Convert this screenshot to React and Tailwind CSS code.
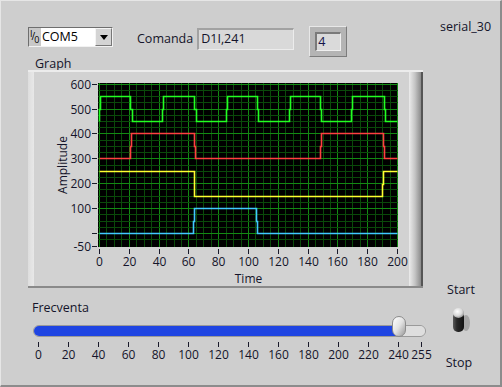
import React from 'react';

const FONT = { fontFamily: '"Open Sans", "Noto Sans", sans-serif' };

// trace points in panel pixel coordinates
const green = [
  [99, 121], [99, 109], [100, 109], [100, 96], [130, 96], [130, 109], [132, 109], [132, 121],
  [162, 121], [162, 109], [163, 109], [163, 96], [194, 96], [194, 109], [196, 109], [196, 121],
  [226, 121], [226, 109], [227, 109], [227, 96], [257, 96], [257, 109], [258, 109], [258, 121],
  [289, 121], [289, 109], [290, 109], [290, 96], [320, 96], [320, 109], [321, 109], [321, 121],
  [351, 121], [351, 109], [352, 109], [352, 96], [384, 96], [384, 109], [385, 109], [385, 121],
  [397, 121],
];
const red = [
  [99, 158], [130, 158], [130, 146], [131, 146], [131, 133], [194, 133], [194, 146], [195, 146],
  [195, 158], [320, 158], [320, 146], [321, 146], [321, 133], [383, 133], [383, 146], [384, 146],
  [384, 158], [397, 158],
];
const yellow = [
  [99, 171], [194, 171], [194, 196], [382, 196], [382, 184], [383, 184], [383, 171], [397, 171],
];
const cyan = [
  [99, 233], [193, 233], [193, 221], [194, 221], [194, 208], [256, 208], [256, 221], [257, 221],
  [257, 233], [397, 233],
];

const pts = (a) => a.map(([x, y]) => `${x + 0.5},${y + 0.5}`).join(' ');

const xOf = (t) => Math.round(99 + t * 1.49);
const yOf = (v) => (v === -50 ? 246 : Math.round(233 - v * 0.249));

function Chart() {
  const minorX = [];
  for (let t = 0; t <= 200; t += 5) minorX.push(t);
  const minorY = [];
  for (let v = -25; v <= 600; v += 25) minorY.push(v);
  const yTicks = [600, 500, 400, 300, 200, 100, 0, -50];
  const xTicks = [0, 20, 40, 60, 80, 100, 120, 140, 160, 180, 200];
  return (
    <svg width="375" height="214" viewBox="34 72 375 214" className="block">
      <rect x="98" y="83" width="300" height="164" fill="#000" />
      <g shapeRendering="crispEdges">
        {minorX.map((t) => (
          <line key={'mx' + t} x1={xOf(t) + 0.5} x2={xOf(t) + 0.5} y1="83" y2="247"
            stroke={t % 20 === 0 ? '#138a13' : '#0a4a0a'} strokeWidth="1" />
        ))}
        {minorY.map((v) => (
          <line key={'my' + v} y1={yOf(v) + 0.5} y2={yOf(v) + 0.5} x1="98" x2="398"
            stroke={v % 100 === 0 ? '#138a13' : '#0a4a0a'} strokeWidth="1" />
        ))}
        {yTicks.map((v) => (
          <line key={'yl' + v} x1="92" x2="97" y1={yOf(v) + 0.5} y2={yOf(v) + 0.5} stroke="#1a1a2a" />
        ))}
        {xTicks.map((t) => (
          <line key={'xl' + t} x1={xOf(t) + 0.5} x2={xOf(t) + 0.5} y1="249" y2="254" stroke="#1a1a2a" />
        ))}
      </g>
      <polyline points={pts(green)} fill="none" stroke="#22ff22" strokeWidth="1.6" />
      <polyline points={pts(red)} fill="none" stroke="#ff4040" strokeWidth="1.6" />
      <polyline points={pts(yellow)} fill="none" stroke="#ffff30" strokeWidth="1.6" />
      <polyline points={pts(cyan)} fill="none" stroke="#40c8ff" strokeWidth="1.6" />

      {yTicks.filter((v) => v !== 0).map((v) => (
        <text key={'yt' + v} x="91" y={yOf(v) + 4.5} textAnchor="end" fontSize="12" fill="#14142a" style={FONT}>
          {v}
        </text>
      ))}
      {xTicks.map((t) => (
        <text key={'xt' + t} x={xOf(t) + 0.5} y="266" textAnchor="middle" fontSize="12" fill="#14142a" style={FONT}>
          {t}
        </text>
      ))}
      <text x="248.5" y="283" textAnchor="middle" fontSize="12" fill="#14142a" style={FONT}>Time</text>
      <text x="66.5" y="165" textAnchor="middle" fontSize="12" fill="#14142a" style={FONT}
        transform="rotate(-90 66.5 165)">Amplitude</text>
    </svg>
  );
}

function SliderScale() {
  const ticks = [0, 20, 40, 60, 80, 100, 120, 140, 160, 180, 200, 220, 240, 255];
  return (
    <svg width="412" height="24" viewBox="28 340 412 24" className="block">
      {ticks.map((t) => {
        const x = Math.round(38 + t * 1.5) + 0.5;
        return (
          <g key={t}>
            <line x1={x} x2={x} y1="341" y2="346" stroke="#1a1a2a" shapeRendering="crispEdges" />
            <text x={x} y="358" textAnchor="middle" fontSize="12" fill="#14142a" style={FONT}>{t}</text>
          </g>
        );
      })}
    </svg>
  );
}

function Toggle() {
  return (
    <svg width="22" height="27" viewBox="0 0 22 27" className="block">
      <defs>
        <linearGradient id="body" x1="0" x2="1" y1="0" y2="0">
          <stop offset="0" stopColor="#5a5a5a" />
          <stop offset="0.35" stopColor="#2a2a2a" />
          <stop offset="1" stopColor="#111" />
        </linearGradient>
        <radialGradient id="head" cx="0.4" cy="0.35" r="0.7">
          <stop offset="0" stopColor="#ffffff" />
          <stop offset="0.6" stopColor="#d8d8d8" />
          <stop offset="1" stopColor="#8a8a8a" />
        </radialGradient>
      </defs>
      <ellipse cx="15" cy="16" rx="4" ry="8" fill="#9c9c9c" opacity="0.8" />
      <rect x="2" y="5" width="11" height="20" rx="5" fill="url(#body)" />
      <ellipse cx="7.5" cy="6" rx="5.5" ry="5" fill="url(#head)" />
    </svg>
  );
}

export default function App() {
  return (
    <div
      className="w-[502px] h-[387px] bg-[#cecece] border-t border-l border-t-[#e6e6e6] border-l-[#e6e6e6] border-r-2 border-b-2 border-r-[#8c8c8c] border-b-[#8c8c8c] flex overflow-hidden text-[12px] text-[#14142a]"
      style={FONT}
    >
      {/* left column */}
      <div className="w-[398px] ml-[27px] pt-[25px] flex flex-col">
        {/* top row */}
        <div className="flex items-start h-[31px]">
          <div className="mt-[1px] w-[85px] h-[20px] flex border border-t-[#6e6e6e] border-l-[#6e6e6e] border-r-[#f2f2f2] border-b-[#f2f2f2] bg-[#c8c8c8]">
            <div className="w-[12px] pl-[1px] pt-[1px] text-[9px] leading-[8px] text-black">
              I<span className="inline-block -ml-[1px] translate-y-[3px] text-[10px]">/</span><span className="inline-block -ml-[1px] translate-y-[6px]">0</span>
            </div>
            <div className="w-[54px] bg-white leading-[18px] pl-[1px] text-black text-[12.5px]">COM5</div>
            <div className="flex-1 flex items-center justify-center bg-[#d4d4d4] border border-t-[#f4f4f4] border-l-[#f4f4f4] border-r-[#777] border-b-[#777]">
              <div className="w-0 h-0 border-l-[4px] border-r-[4px] border-t-[5px] border-l-transparent border-r-transparent border-t-black" />
            </div>
          </div>
          <div className="ml-[24px] mt-[5px] leading-[16px] text-[12.5px]">Comanda</div>
          <div className="ml-[4px] mt-[2px] w-[97px] h-[22px] bg-[#d9d9d9] border-t-2 border-l-2 border-t-[#a2a2a2] border-l-[#a2a2a2] border-r border-b border-r-[#ececec] border-b-[#ececec] leading-[18px] pl-[2px] text-[12.5px]">
            D1I,241
          </div>
          <div className="ml-[15px] w-[38px] h-[31px] bg-[#b4b4b4] border border-t-[#e8e8e8] border-l-[#e8e8e8] border-r-[#7c7c7c] border-b-[#7c7c7c] p-[5px]">
            <div className="w-full h-full bg-[#dadada] border-t-2 border-l-2 border-t-[#7a7a7a] border-l-[#7a7a7a] border-r border-b border-r-[#f0f0f0] border-b-[#f0f0f0] leading-[16px] pl-[1px] text-[12.5px] text-[#14144a]">
              4
            </div>
          </div>
        </div>

        {/* graph */}
        <div className="ml-[7px] h-[13px] leading-[13px] text-[12.5px]">Graph</div>
        <div className="w-[395px] h-[218px] flex bg-[#d2d2d2] border-t-2 border-t-[#ececec] border-b-2 border-b-[#8a8a8a]">
          <div className="w-[6px] bg-gradient-to-r from-[#dedede] to-[#e8e8e8]" />
          <Chart />
          <div className="w-[14px] bg-gradient-to-r from-[#ececec] via-[#c4c4c4] to-[#8c8c8c] border-r-2 border-r-[#555]" />
        </div>

        {/* slider */}
        <div className="ml-[4px] mt-[12px] leading-[16px] text-[12.5px]">Frecventa</div>
        <div className="relative h-[22px]">
          <div className="ml-[5px] mt-[9px] w-[393px] h-[12px] flex rounded-full overflow-hidden border border-[#9a9a9a]">
            <div className="w-[362px] bg-[#1f45e2]" />
            <div className="flex-1 bg-[#dedede]" />
          </div>
          <div className="absolute left-[364px] top-0 w-[14px] h-[21px] rounded-[7px] bg-gradient-to-br from-[#ffffff] via-[#e2e2e2] to-[#9a9a9a] border border-[#8c8c8c]" />
        </div>
        <div className="mt-[3px] w-[412px]">
          <SliderScale />
        </div>
      </div>

      {/* right column */}
      <div className="flex-1 pt-[18px] pl-[14px] flex flex-col">
        <div className="leading-[16px] text-[12.5px]">serial_30</div>
        <div className="w-[42px] flex flex-col items-center mt-[247px]">
          <div className="leading-[16px] text-[12.5px]">Start</div>
          <div className="mt-[9px] ml-[2px]">
            <Toggle />
          </div>
          <div className="mt-[21px] leading-[16px] text-[12.5px] -ml-[4px]">Stop</div>
        </div>
      </div>
    </div>
  );
}
